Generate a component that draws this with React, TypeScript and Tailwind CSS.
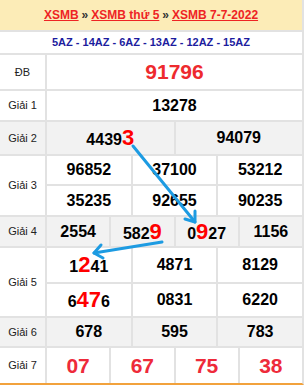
import React from 'react';

type Part = { t: string; hot?: boolean };
type Num = Part[];

const n = (...parts: (string | [string])[]): Num =>
  parts.map((p) => (typeof p === 'string' ? { t: p } : { t: p[0], hot: true }));

const GRAY = 'bg-[#f2f2f2]';
const WHITE = 'bg-white';

const NumCell: React.FC<{ value: Num; span: string; bg: string }> = ({ value, span, bg }) => (
  <div className={`${span} ${bg} flex items-center justify-center text-[16px] font-bold leading-none text-black`}>
    <span>
      {value.map((p, i) =>
        p.hot ? (
          <span key={i} className="text-[22px] text-[#ff0000]">{p.t}</span>
        ) : (
          <span key={i}>{p.t}</span>
        )
      )}
    </span>
  </div>
);

const Label: React.FC<{ text: string; bg: string; rows?: boolean }> = ({ text, bg, rows }) => (
  <div className={`${rows ? 'row-span-2' : ''} ${bg} flex items-center justify-center text-[11px] text-[#222]`}>
    {text}
  </div>
);

export default function App() {
  return (
    <div className="relative w-[305px] h-[385px] bg-white font-['Liberation_Sans',Arial,sans-serif]">
      <div className="grid w-[304px] grid-cols-[45px_repeat(12,minmax(0,1fr))] grid-rows-[30px_21px_34px_29px_32px_28px_29px_29px_34px_32px_28px_35px] gap-[2px] bg-[#e2e2e2] border-r-2 border-r-[#e2e2e2] border-b-2 border-b-[#f2a23c]">
        {/* breadcrumb */}
        <div className="col-span-full bg-[#fcecb7] flex items-center justify-center text-[12px] font-bold text-[#333]">
          <span className="text-[#ee2424] underline">XSMB</span>
          <span className="mx-[3px]">»</span>
          <span className="text-[#ee2424] underline">XSMB thứ 5</span>
          <span className="mx-[3px]">»</span>
          <span className="text-[#ee2424] underline">XSMB 7-7-2022</span>
        </div>
        <div className="col-span-full bg-white flex items-center justify-center text-[11px] font-bold text-[#1c1c9e]">
          5AZ - 14AZ - 6AZ - 13AZ - 12AZ - 15AZ
        </div>

        {/* ĐB */}
        <Label text="ĐB" bg={WHITE} />
        <div className="col-span-12 bg-white flex items-center justify-center text-[21px] font-bold text-[#ee2a2e]">
          91796
        </div>

        {/* Giải 1 */}
        <Label text="Giải 1" bg={WHITE} />
        <NumCell value={n('13278')} span="col-span-12" bg={WHITE} />

        {/* Giải 2 */}
        <Label text="Giải 2" bg={GRAY} />
        <NumCell value={n('4439', ['3'])} span="col-span-6" bg={GRAY} />
        <NumCell value={n('94079')} span="col-span-6" bg={GRAY} />

        {/* Giải 3 */}
        <Label text="Giải 3" bg={WHITE} rows />
        <NumCell value={n('96852')} span="col-span-4" bg={WHITE} />
        <NumCell value={n('37100')} span="col-span-4" bg={WHITE} />
        <NumCell value={n('53212')} span="col-span-4" bg={WHITE} />
        <NumCell value={n('35235')} span="col-span-4" bg={WHITE} />
        <NumCell value={n('92655')} span="col-span-4" bg={WHITE} />
        <NumCell value={n('90235')} span="col-span-4" bg={WHITE} />

        {/* Giải 4 */}
        <Label text="Giải 4" bg={GRAY} />
        <NumCell value={n('2554')} span="col-span-3" bg={GRAY} />
        <NumCell value={n('582', ['9'])} span="col-span-3" bg={GRAY} />
        <NumCell value={n('0', ['9'], '27')} span="col-span-3" bg={GRAY} />
        <NumCell value={n('1156')} span="col-span-3" bg={GRAY} />

        {/* Giải 5 */}
        <Label text="Giải 5" bg={WHITE} rows />
        <NumCell value={n('1', ['2'], '41')} span="col-span-4" bg={WHITE} />
        <NumCell value={n('4871')} span="col-span-4" bg={WHITE} />
        <NumCell value={n('8129')} span="col-span-4" bg={WHITE} />
        <NumCell value={n('6', ['47'], '6')} span="col-span-4" bg={WHITE} />
        <NumCell value={n('0831')} span="col-span-4" bg={WHITE} />
        <NumCell value={n('6220')} span="col-span-4" bg={WHITE} />

        {/* Giải 6 */}
        <Label text="Giải 6" bg={GRAY} />
        <NumCell value={n('678')} span="col-span-4" bg={GRAY} />
        <NumCell value={n('595')} span="col-span-4" bg={GRAY} />
        <NumCell value={n('783')} span="col-span-4" bg={GRAY} />

        {/* Giải 7 */}
        <Label text="Giải 7" bg={WHITE} />
        {['07', '67', '75', '38'].map((v) => (
          <div key={v} className="col-span-3 bg-white flex items-center justify-center text-[21px] font-bold text-[#ee2a3a]">
            {v}
          </div>
        ))}
      </div>

      {/* lô rơi arrows */}
      <svg className="absolute inset-0 pointer-events-none" width="305" height="385" viewBox="0 0 305 385">
        <g stroke="#1d9be2" strokeWidth="3" strokeLinecap="round" strokeLinejoin="round" fill="none">
          <line x1="133" y1="146" x2="195" y2="222" />
          <polyline points="185,219 195,222 195,211" />
          <line x1="162" y1="242" x2="94" y2="253" />
          <polyline points="101,245 94,253 103,258" />
        </g>
      </svg>
    </div>
  );
}
